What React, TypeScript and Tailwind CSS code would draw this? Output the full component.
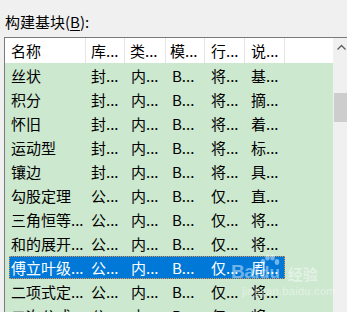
import React from "react";

const rows: string[][] = [
  ["丝状", "封...", "内...", "B...", "将...", "基..."],
  ["积分", "封...", "内...", "B...", "将...", "摘..."],
  ["怀旧", "封...", "内...", "B...", "将...", "着..."],
  ["运动型", "封...", "内...", "B...", "将...", "标..."],
  ["镶边", "封...", "内...", "B...", "将...", "具..."],
  ["勾股定理", "公...", "内...", "B...", "仅...", "直..."],
  ["三角恒等...", "公...", "内...", "B...", "仅...", "将..."],
  ["和的展开...", "公...", "内...", "B...", "仅...", "将..."],
  ["傅立叶级...", "公...", "内...", "B...", "仅...", "周..."],
  ["二项式定...", "公...", "内...", "B...", "仅...", "将..."],
  ["二次公式", "公...", "内...", "B...", "仅...", "将..."],
];

const headers = ["名称", "库...", "类...", "模...", "行...", "说..."];

export default function App() {
  return (
    <div className="relative w-[347px] h-[312px] overflow-hidden bg-[#f0f0f0] font-['Noto_Sans_CJK_SC','Noto_Sans',sans-serif] text-[15px] text-black">
      <div className="pl-[5px] pt-[12px]">
        <div className="h-[20px] leading-[20px] whitespace-nowrap">
          构建基块(<span className="underline underline-offset-2">B</span>):
        </div>
      </div>
      <div className="ml-[4px] mt-[5px] w-[360px] border-l border-t border-[#7a7a7a] flex">
        <div className="w-[328px] flex flex-col">
          <div className="h-[25px] bg-white flex leading-[25px]">
            <div className="w-[81px] pl-[6px] border-r border-[#e5e5e5]">{headers[0]}</div>
            <div className="w-[39px] pl-[5px] border-r border-[#e5e5e5] whitespace-nowrap">{headers[1]}</div>
            <div className="w-[41px] pl-[5px] border-r border-[#e5e5e5] whitespace-nowrap">{headers[2]}</div>
            <div className="w-[39px] pl-[4px] border-r border-[#e5e5e5] whitespace-nowrap">{headers[3]}</div>
            <div className="w-[40px] pl-[6px] border-r border-[#e5e5e5] whitespace-nowrap">{headers[4]}</div>
            <div className="w-[40px] pl-[6px] border-r border-[#e5e5e5] whitespace-nowrap">{headers[5]}</div>
            <div className="flex-1" />
          </div>
          <div className="h-[260px] bg-[#cce8cf] flex flex-col">
            {rows.map((r, i) => {
              const sel = i === 8;
              return (
                <div key={i} className="h-[24px] pl-[4px] flex">
                  <div
                    className={
                      sel
                        ? "mt-[1px] h-[23px] w-[276px] flex leading-[24px] whitespace-nowrap bg-[#0078d7] text-white outline outline-1 outline-dotted outline-[#e8954a] -outline-offset-1"
                        : "mt-[1px] h-[23px] w-[276px] flex leading-[24px] whitespace-nowrap"
                    }
                  >
                    <div className="w-[77px] pl-[2px]">{r[0]}</div>
                    <div className="w-[39px] pl-[5px]">{r[1]}</div>
                    <div className="w-[41px] pl-[6px]">{r[2]}</div>
                    <div className="w-[39px] pl-[6px]">{r[3]}</div>
                    <div className="w-[40px] pl-[6px]">{r[4]}</div>
                    <div className="w-[40px] pl-[6px]">{r[5]}</div>
                  </div>
                </div>
              );
            })}
          </div>
        </div>
        <div className="w-[17px] flex flex-col bg-[#f0f0f0]">
          <div className="h-[17px] flex items-center justify-center">
            <svg width="9" height="6" viewBox="0 0 9 6">
              <path d="M0.5 5.5 L4.5 1.5 L8.5 5.5" fill="none" stroke="#606060" strokeWidth="1.4" />
            </svg>
          </div>
          <div className="mt-[38px] mx-[1px] h-[29px] bg-[#cdcdcd]" />
        </div>
      </div>

      {/* watermark overlay */}
      <div className="absolute left-[231px] top-[262px] pointer-events-none text-white/45 leading-none">
        <div className="flex items-end">
          <span className="font-['Liberation_Sans',sans-serif] font-bold text-[19px] tracking-[-0.5px]">Bai</span>
          <span className="relative font-['Liberation_Sans',sans-serif] font-bold text-[17px]">
            <svg className="absolute left-[1px] -top-[10px]" width="20" height="12" viewBox="0 0 20 12">
              <ellipse cx="3" cy="8" rx="2.3" ry="3" fill="currentColor" />
              <ellipse cx="7.5" cy="3.5" rx="2.3" ry="3" fill="currentColor" />
              <ellipse cx="12.5" cy="3.5" rx="2.3" ry="3" fill="currentColor" />
              <ellipse cx="17" cy="8" rx="2.3" ry="3" fill="currentColor" />
            </svg>
            du
          </span>
          <span className="ml-[8px] text-[15px] font-bold">经验</span>
        </div>
        <div className="mt-[5px] ml-[11px] text-[11px] font-['Liberation_Sans',sans-serif] tracking-[0.3px]">jingyan.baidu.com</div>
      </div>
    </div>
  );
}
